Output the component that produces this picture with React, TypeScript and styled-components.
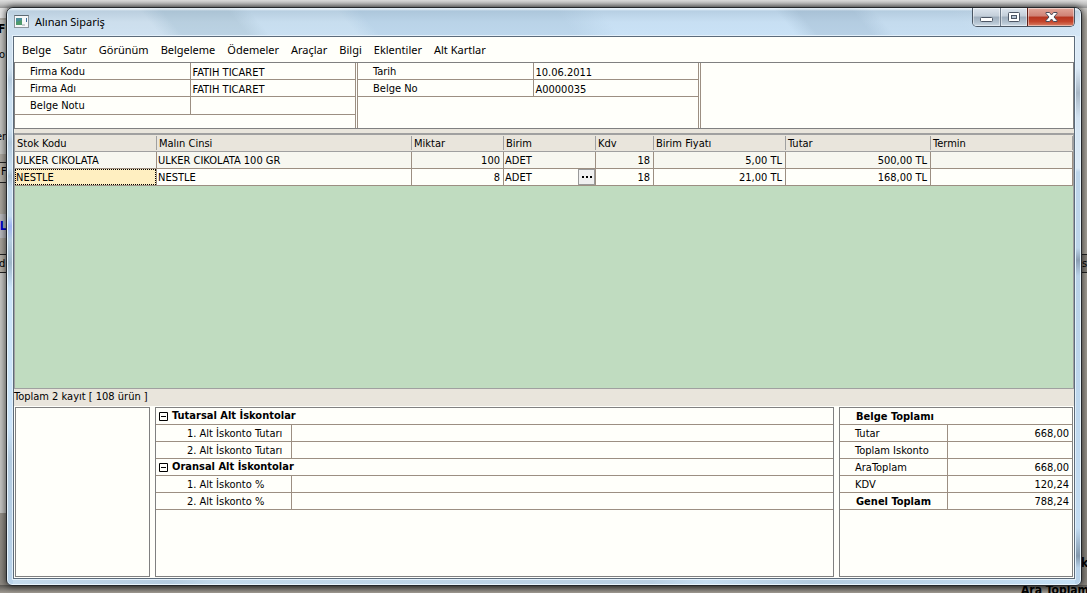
import React from "react";
import styled, { createGlobalStyle, css } from "styled-components";

const GlobalStyle = createGlobalStyle`
  * { box-sizing: border-box; }
  body { margin: 0; }
  button, input { font: inherit; color: inherit; }
`;

const LINE = "#9c8f82";
const PAPER = "#fffffa";
const BEIGE = "#e9e5dc";
const GREY = "#808080";
const gridFont = '"DejaVu Sans Condensed", "DejaVu Sans", sans-serif';
const menuFont = '"Noto Sans", "Open Sans", sans-serif';

const Desktop = styled.div`
  position: relative;
  display: flex;
  min-height: 100vh;
  padding: 7px 5px 7px 6px;
  overflow: hidden;
  background: linear-gradient(#dcdcdc, #b0aca4 20px, #a39e95 60%, #8a867f);
  font: 11px/16px ${gridFont};
  color: #000;
`;

const Behind = styled.div`
  position: absolute;
  inset: 0;
  overflow: hidden;
`;

const TopStrip = styled.div`
  position: absolute;
  inset: 0 0 auto 0;
  height: 8px;
  background: linear-gradient(#dedede, #c4c4c4 50%, #969696);
`;

const BottomStrip = styled.div`
  position: absolute;
  inset: auto 0 0 0;
  height: 8px;
  background: linear-gradient(#5b5955, #a09b93);
`;

const Piece = styled.div<{ $top: number; $height: number; $right?: boolean; $fill: string; $lined?: boolean }>`
  position: absolute;
  top: ${(p) => p.$top}px;
  height: ${(p) => p.$height}px;
  width: 7px;
  ${(p) => (p.$right ? "right: 0;" : "left: 0;")}
  background: ${(p) => p.$fill};
  border: 0 solid #222;
  border-width: ${(p) => (p.$lined ? "1px 0" : "0")};
`;

const Scrap = styled.span<{ $x: number; $y: number; $bold?: boolean; $color?: string }>`
  position: absolute;
  left: ${(p) => p.$x}px;
  top: ${(p) => p.$y}px;
  white-space: nowrap;
  font-size: ${(p) => (p.$bold ? 12 : 11)}px;
  font-weight: ${(p) => (p.$bold ? 700 : 400)};
  color: ${(p) => p.$color ?? "#000"};
`;

const Frame = styled.section`
  position: relative;
  flex: 1;
  min-width: 0;
  display: flex;
  flex-direction: column;
  padding: 0 6px 6px;
  border: 1px solid #24272b;
  border-radius: 7px 7px 6px 6px;
  background:
    linear-gradient(#cfe0ee 0 60px, #b7ccde 72px, #cbe0f1 90px 120px, #b3c8db 135px, #c8dff2 160px, #a9bfd2 168px, #c3daee 180px 208px, #9fb4f4 218px, #b5cde0 232px, #9fb7c9 255px, #cbe4fa 280px 420px, #b3cbdf 450px, #b9d3ea) left / 6px 100% no-repeat,
    linear-gradient(#dceaf6 0 60px, #a9b8c6 85px, #d3e3f1 110px, #dceaf6 160px, #bdd5ea 164px 240px, #8b9fb4 252px, #b9d2e8 268px, #c3dcf2 520px, #8298ad 548px, #b9d3ea 560px) right / 6px 100% no-repeat,
    linear-gradient(90deg, #c6dcee, #b5cce0 15%, #c3daec 20%, #b9cfe2 60%, #c6def2 65%, #b4cce0 75%, #c6e0f5);
  box-shadow: inset 0 0 0 1px #e8f4fc, 0 0 6px 1px rgba(0, 0, 0, 0.6);
`;

const TitleBar = styled.header`
  display: flex;
  align-items: flex-start;
  height: 28px;
  margin: 0 -5px;
  border-radius: 6px 6px 0 0;
  padding-left: 6px;
  background:
    linear-gradient(rgba(255,255,255,.55) 0 1px, rgba(150,175,195,.35) 3px, rgba(190,212,230,.15) 14px, rgba(205,230,250,.2) 28px),
    linear-gradient(50deg, #cfe0ee 0 14%, #b7cede 16% 22%, #c9dff0 24% 32%, #b9d3e8 34% 52%, #c9e1f5 56% 72%, #b2cbe0 74% 79%, #c5dcef 81% 88%, #d8e8f5);
`;

const Title = styled.h1`
  flex: 1;
  margin: 4px 0 0 5px;
  font: 400 11px/20px ${menuFont};
`;

const AppIcon = styled.svg`
  margin-top: 7px;
`;

const Controls = styled.div`
  display: flex;
  margin-right: 5px;
  height: 19px;
  border: 1px solid #4a5663;
  border-top: 0;
  border-radius: 0 0 5px 5px;
  overflow: hidden;
`;

const ControlButton = styled.button<{ $close?: boolean }>`
  display: grid;
  place-items: center;
  width: ${(p) => (p.$close ? 47 : 27)}px;
  padding: 0;
  border: 0;
  border-left: 1px solid ${(p) => (p.$close ? "#5e1f18" : "#6e7b8a")};
  background: ${(p) =>
    p.$close
      ? "linear-gradient(#e2a698, #cf8175 45%, #b5341f 50%, #c4442b 75%, #d98066)"
      : "linear-gradient(#dde5ee, #c3ced9 45%, #9faebd 50%, #b4c3d0 80%, #cddbe6)"};
  box-shadow: inset 0 0 0 1px rgba(255, 255, 255, 0.45);
  &:first-child { border-left: 0; }
`;

const Client = styled.main`
  flex: 1;
  display: flex;
  flex-direction: column;
  border: 1px solid #5c6b7a;
  background: ${PAPER};
  box-shadow: 0 0 0 1px #e4f1fb;
`;

const MenuBar = styled.nav`
  display: flex;
  gap: 12px;
  padding: 3px 8px 2px;
  font: 11px/20px ${menuFont};
`;

const MenuItem = styled.button`
  padding: 0;
  border: 0;
  background: none;
  white-space: nowrap;
`;

const DocHeader = styled.div`
  display: grid;
  grid-template-columns: 342fr 343fr 373fr;
  min-height: 67px;
  border: 1px solid ${GREY};
  background: ${PAPER};
`;

const HeaderPane = styled.div<{ $last?: boolean }>`
  display: flex;
  flex-direction: column;
  border-right: ${(p) => (p.$last ? "0" : `1px solid ${LINE}`)};
  margin-right: ${(p) => (p.$last ? 0 : 1)}px;
  & + & { border-left: 1px solid ${LINE}; }
`;

const Field = styled.label<{ $tall?: boolean }>`
  display: grid;
  grid-template-columns: 177fr 164fr;
  height: ${(p) => (p.$tall ? 18 : 17)}px;
  border-bottom: 1px solid ${LINE};
  line-height: 14px;
`;

const FieldName = styled.span`
  padding: 2px 0 0 15px;
  border-right: 1px solid ${LINE};
`;

const textBox = css`
  width: 100%;
  min-width: 0;
  height: 16px;
  padding: 2px 2px 0 1px;
  border: 0;
  outline: 0;
  background: none;
  line-height: 14px;
`;

const FieldInput = styled.input`
  ${textBox}
`;

const GridArea = styled.div`
  flex: 1;
  margin-top: 4px;
  min-height: 256px;
  border: 1px solid #a0a0a0;
  border-top-width: 2px;
  background: #c0dcc0;
`;

const Upper = styled.div`
  flex: 1;
  display: flex;
  flex-direction: column;
  background: ${BEIGE};
`;

const StockTable = styled.table`
  width: 100%;
  table-layout: fixed;
  border-collapse: separate;
  border-spacing: 0;
`;

const HeadCell = styled.th`
  height: 17px;
  padding: 1px 0;
  text-align: left;
  font-weight: 400;
  line-height: 14px;
  background: ${BEIGE};
  border-bottom: 1px solid #a0a0a0;
  & > span { display: block; height: 14px; padding: 1px 0 0 2px; line-height: 14px; border-right: 1px solid #a0a0a0; white-space: nowrap; }
`;

const StockRow = styled.tr<{ $alt?: boolean }>`
  background: ${(p) => (p.$alt ? "#f7f7f0" : PAPER)};
`;

const Cell = styled.td<{ $num?: boolean }>`
  height: 17px;
  padding: 0;
  vertical-align: top;
  text-align: ${(p) => (p.$num ? "right" : "left")};
  white-space: nowrap;
  border-right: 1px solid ${LINE};
  border-bottom: 1px solid ${LINE};
`;

const CellText = styled.div`
  height: 16px;
  padding: 2px 3px 0 1px;
  line-height: 14px;
`;

const FocusedText = styled.div`
  height: 16px;
  padding: 1px 0 0;
  border: 1px dotted #000;
  background: #ffefc1;
  line-height: 14px;
`;

const UnitCell = styled.div`
  display: flex;
  justify-content: space-between;
`;

const MoreButton = styled.button`
  display: grid;
  place-items: center;
  width: 17px;
  height: 16px;
  padding: 0;
  border: 1px solid #9a9a9a;
  background: #f0f0f0;
`;

const Status = styled.div`
  height: 17px;
  line-height: 15px;
`;

const Lower = styled.div`
  display: grid;
  grid-template-columns: 135fr 679fr 234fr;
  gap: 5px;
  height: 172px;
  padding: 1px;
`;

const Panel = styled.div`
  border: 1px solid ${GREY};
  background: ${PAPER};
`;

const PanelTable = styled.table`
  width: 100%;
  table-layout: fixed;
  border-collapse: separate;
  border-spacing: 0;
`;

const GroupCell = styled.th`
  height: 17px;
  padding: 2px 0 0 16px;
  text-align: left;
  font-weight: 700;
  line-height: 14px;
  border-bottom: 1px solid ${LINE};
`;

const ToggleCell = styled(GroupCell)`
  padding: 0 0 0 3px;
`;

const GroupToggle = styled.button`
  display: flex;
  align-items: center;
  gap: 4px;
  height: 16px;
  padding: 0;
  border: 0;
  background: none;
  white-space: nowrap;
`;

const NameCell = styled.th<{ $indent: number; $bold?: boolean }>`
  height: 17px;
  padding: 2px 0 0 ${(p) => p.$indent}px;
  text-align: left;
  font-weight: ${(p) => (p.$bold ? 700 : 400)};
  line-height: 14px;
  white-space: nowrap;
  border-right: 1px solid ${LINE};
  border-bottom: 1px solid ${LINE};
`;

const ValueCell = styled.td`
  height: 17px;
  padding: 2px 3px 0 0;
  text-align: right;
  line-height: 14px;
  border-bottom: 1px solid ${LINE};
`;

const InputCell = styled(ValueCell)`
  padding: 0;
`;

const ValueInput = styled.input`
  ${textBox}
  display: block;
`;

const menus = ["Belge", "Satır", "Görünüm", "Belgeleme", "Ödemeler", "Araçlar", "Bilgi", "Eklentiler", "Alt Kartlar"];

const columns = [
  { name: "Stok Kodu", share: 142 },
  { name: "Malın Cinsi", share: 255 },
  { name: "Miktar", share: 92 },
  { name: "Birim", share: 92 },
  { name: "Kdv", share: 58 },
  { name: "Birim Fiyatı", share: 132 },
  { name: "Tutar", share: 145 },
  { name: "Termin", share: 142 },
];
const columnTotal = columns.reduce((sum, c) => sum + c.share, 0);

const rows = [
  { code: "ULKER CIKOLATA", name: "ULKER CIKOLATA 100 GR", qty: "100", unit: "ADET", vat: "18", price: "5,00 TL", total: "500,00 TL" },
  { code: "NESTLE", name: "NESTLE", qty: "8", unit: "ADET", vat: "18", price: "21,00 TL", total: "168,00 TL" },
];

const discounts = [
  { group: "Tutarsal Alt İskontolar", items: ["1. Alt İskonto Tutarı", "2. Alt İskonto Tutarı"] },
  { group: "Oransal Alt İskontolar", items: ["1. Alt İskonto %", "2. Alt İskonto %"] },
];

const totals = [
  { name: "Tutar", value: "668,00" },
  { name: "Toplam Iskonto", value: "" },
  { name: "AraToplam", value: "668,00" },
  { name: "KDV", value: "120,24" },
  { name: "Genel Toplam", value: "788,24", bold: true },
];

function Backdrop() {
  return (
    <Behind aria-hidden="true">
      <Piece $top={0} $height={18} $fill="#e4e4e4" />
      <Piece $top={20} $height={134} $fill="#c4c4c0" />
      <Piece $top={162} $height={21} $fill="#b5b0a6" $lined />
      <Piece $top={214} $height={24} $fill="#b9b9bd" />
      <Piece $top={254} $height={19} $fill="#b5b0a6" $lined />
      <Piece $top={273} $height={240} $fill="#c6c6c3" />
      <Piece $right $top={254} $height={19} $fill="#85817a" $lined />
      <TopStrip />
      <BottomStrip />
      <Scrap $x={-2} $y={21} $bold>Fi</Scrap>
      <Scrap $x={-1} $y={47}>o</Scrap>
      <Scrap $x={-4} $y={129}>er</Scrap>
      <Scrap $x={1} $y={164}>F</Scrap>
      <Scrap $x={-4} $y={218} $bold $color="#0000d0">iL</Scrap>
      <Scrap $x={-1} $y={256}>d</Scrap>
      <Scrap $x={1082} $y={256}>s</Scrap>
      <Scrap $x={1081} $y={555} $bold>k</Scrap>
      <Scrap $x={1021} $y={582} $bold>Ara Toplam</Scrap>
    </Behind>
  );
}

export default function App() {
  return (
    <Desktop>
      <GlobalStyle />
      <Backdrop />
      <Frame>
        <TitleBar>
          <AppIcon width="16" height="13" viewBox="0 0 16 13">
            <rect x="0.5" y="0.5" width="14" height="12" fill="#f6f7f8" stroke="#8b949c" />
            <path d="M.5 .5h14" stroke="#5f6a73" />
            <rect x="2" y="3" width="6" height="7" fill="#4b8f9a" />
            <path d="M2 10V7l6-2v5z" fill="#4f9a6c" />
            <rect x="8" y="9" width="3" height="2" fill="#c9ced2" />
            <rect x="12" y="3" width="1" height="4" fill="#3c6f9c" />
          </AppIcon>
          <Title>Alınan Sipariş</Title>
          <Controls>
            <ControlButton aria-label="Simge durumuna küçült">
              <svg width="13" height="19" viewBox="0 0 13 19">
                <rect x="0.5" y="9.5" width="12" height="4" rx="1" fill="#fff" stroke="#4d5665" />
              </svg>
            </ControlButton>
            <ControlButton aria-label="Ekranı kapla">
              <svg width="13" height="19" viewBox="0 0 13 19">
                <rect x="0.5" y="4.5" width="11" height="9" rx="1" fill="#fff" stroke="#4d5665" />
                <rect x="3.5" y="7.5" width="5" height="3" fill="#b9c6d4" stroke="#4d5665" />
              </svg>
            </ControlButton>
            <ControlButton $close aria-label="Kapat">
              <svg width="13" height="19" viewBox="0 0 13 19">
                <path d="M1 4.5H4.5L6.5 7L8.5 4.5H12V5.5L9 9L12 12.5V13.5H8.5L6.5 11L4.5 13.5H1V12.5L4 9L1 5.5Z" fill="#fff" stroke="#4b4b58" />
              </svg>
            </ControlButton>
          </Controls>
        </TitleBar>
        <Client>
          <MenuBar>
            {menus.map((m) => <MenuItem key={m}>{m}</MenuItem>)}
          </MenuBar>
          <Upper>
            <DocHeader>
              <HeaderPane>
                <Field><FieldName>Firma Kodu</FieldName><FieldInput defaultValue="FATIH TICARET" /></Field>
                <Field><FieldName>Firma Adı</FieldName><FieldInput defaultValue="FATIH TICARET" /></Field>
                <Field $tall><FieldName>Belge Notu</FieldName><FieldInput /></Field>
              </HeaderPane>
              <HeaderPane>
                <Field><FieldName>Tarih</FieldName><FieldInput defaultValue="10.06.2011" /></Field>
                <Field><FieldName>Belge No</FieldName><FieldInput defaultValue="A0000035" /></Field>
              </HeaderPane>
              <HeaderPane $last />
            </DocHeader>
            <GridArea>
              <StockTable>
                <colgroup>
                  {columns.map((c) => <col key={c.name} style={{ width: `${(c.share / columnTotal) * 100}%` }} />)}
                </colgroup>
                <thead>
                  <tr>{columns.map((c) => <HeadCell key={c.name}><span>{c.name}</span></HeadCell>)}</tr>
                </thead>
                <tbody>
                  {rows.map((r, i) => (
                    <StockRow key={r.code} $alt={i === 0}>
                      <Cell>{i === 1 ? <FocusedText>{r.code}</FocusedText> : <CellText>{r.code}</CellText>}</Cell>
                      <Cell><CellText>{r.name}</CellText></Cell>
                      <Cell $num><CellText>{r.qty}</CellText></Cell>
                      <Cell>
                        <UnitCell>
                          <CellText>{r.unit}</CellText>
                          {i === 1 && (
                            <MoreButton aria-label="Birim seç">
                              <svg width="10" height="2" viewBox="0 0 10 2">
                                <path d="M0 0h2v2H0zM4 0h2v2H4zM8 0h2v2H8z" />
                              </svg>
                            </MoreButton>
                          )}
                        </UnitCell>
                      </Cell>
                      <Cell $num><CellText>{r.vat}</CellText></Cell>
                      <Cell $num><CellText>{r.price}</CellText></Cell>
                      <Cell $num><CellText>{r.total}</CellText></Cell>
                      <Cell />
                    </StockRow>
                  ))}
                </tbody>
              </StockTable>
            </GridArea>
            <Status>Toplam 2 kayıt [ 108 ürün ]</Status>
          </Upper>
          <Lower>
            <Panel />
            <Panel>
              <PanelTable>
                <colgroup><col style={{ width: "20.1%" }} /><col /></colgroup>
                {discounts.map((d) => (
                  <tbody key={d.group}>
                    <tr>
                      <ToggleCell colSpan={2}>
                        <GroupToggle aria-expanded="true">
                          <svg width="9" height="9" viewBox="0 0 9 9">
                            <path d="M.5 .5h8v8h-8zM2 4.5h5" fill="none" stroke="#000" />
                          </svg>
                          {d.group}
                        </GroupToggle>
                      </ToggleCell>
                    </tr>
                    {d.items.map((name) => (
                      <tr key={name}>
                        <NameCell $indent={31}>{name}</NameCell>
                        <InputCell><ValueInput aria-label={name} /></InputCell>
                      </tr>
                    ))}
                  </tbody>
                ))}
              </PanelTable>
            </Panel>
            <Panel>
              <PanelTable>
                <colgroup><col style={{ width: "46.6%" }} /><col /></colgroup>
                <tbody>
                  <tr><GroupCell colSpan={2}>Belge Toplamı</GroupCell></tr>
                  {totals.map((t) => (
                    <tr key={t.name}>
                      <NameCell $indent={t.bold ? 16 : 15} $bold={t.bold}>{t.name}</NameCell>
                      <ValueCell>{t.value}</ValueCell>
                    </tr>
                  ))}
                </tbody>
              </PanelTable>
            </Panel>
          </Lower>
        </Client>
      </Frame>
    </Desktop>
  );
}
